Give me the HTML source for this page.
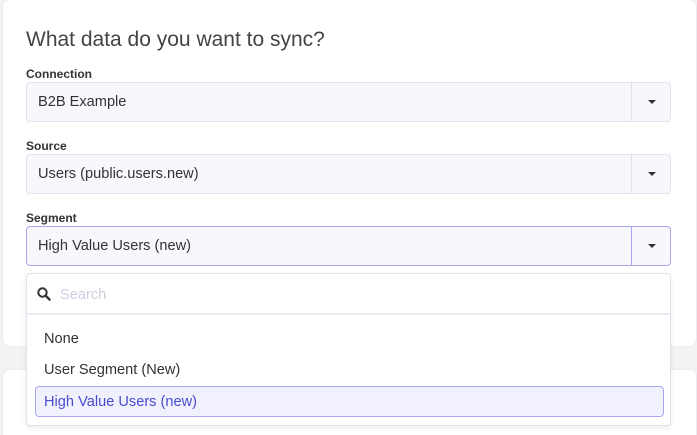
<!DOCTYPE html>
<html><head><style>
html,body{margin:0;width:697px;height:435px;overflow:hidden}
body{background:#f3f3f5;font-family:"Liberation Sans",sans-serif;position:relative;color:#333}
.card{position:absolute;background:#fff;border:1px solid #ececf0;border-radius:8px}
.lbl{position:absolute;left:26px;font-size:12px;font-weight:bold;color:#333}
.sel{position:absolute;left:26px;width:643px;height:38px;background:#f8f7fc;border:1px solid #e3e1ee;border-radius:4px}
.sel span{position:absolute;left:11px;top:11px;font-size:14.6px;color:#333}
.sel .div{position:absolute;left:604px;top:0;width:1px;height:38px;background:#e3e1ee}
.sel .ar{position:absolute;left:621px;top:17px;width:0;height:0;border-left:4px solid transparent;border-right:4px solid transparent;border-top:4px solid #333}
.it{position:absolute;left:17px;font-size:14.6px;color:#333}
</style></head><body>
<div class="card" style="left:2px;top:-1px;width:693px;height:346px"></div>
<div class="card" style="left:2px;top:369px;width:693px;height:80px"></div>
<div style="position:absolute;left:26px;top:28px;font-size:21px;color:#444">What data do you want to sync?</div>
<div class="lbl" style="top:67px">Connection</div>
<div class="sel" style="top:82px"><span>B2B Example</span><div class="div"></div><div class="ar"></div></div>
<div class="lbl" style="top:139px">Source</div>
<div class="sel" style="top:154px"><span>Users (public.users.new)</span><div class="div"></div><div class="ar"></div></div>
<div class="lbl" style="top:211px">Segment</div>
<div class="sel" style="top:226px;border-color:#a8a8f2"><span>High Value Users (new)</span><div class="div" style="background:#a8a8f2"></div><div class="ar"></div></div>
<div style="position:absolute;left:26px;top:273px;width:643px;height:151px;background:#fff;border:1px solid #e3e1ee;border-radius:4px;box-shadow:0 2px 6px rgba(0,0,0,.08)">
 <svg style="position:absolute;left:10px;top:13px" width="14" height="14" viewBox="0 0 14 14"><circle cx="5.5" cy="5.5" r="4.2" fill="none" stroke="#333" stroke-width="2"/><path d="M8.6 8.6L12.5 12.5" stroke="#333" stroke-width="2.4" stroke-linecap="round"/></svg>
 <div style="position:absolute;left:33px;top:13px;font-size:14.6px;color:#cfcde0">Search</div>
 <div style="position:absolute;left:0;top:39px;width:643px;height:2px;background:#ecebf3"></div>
 <div class="it" style="top:57px">None</div>
 <div class="it" style="top:88px">User Segment (New)</div>
 <div style="position:absolute;left:8px;top:112px;width:627px;height:29px;background:#f1f1fe;border:1px solid #a8a8f2;border-radius:4px"></div>
 <div class="it" style="top:120px;color:#4a4ad0">High Value Users (new)</div>
</div>
</body></html>
